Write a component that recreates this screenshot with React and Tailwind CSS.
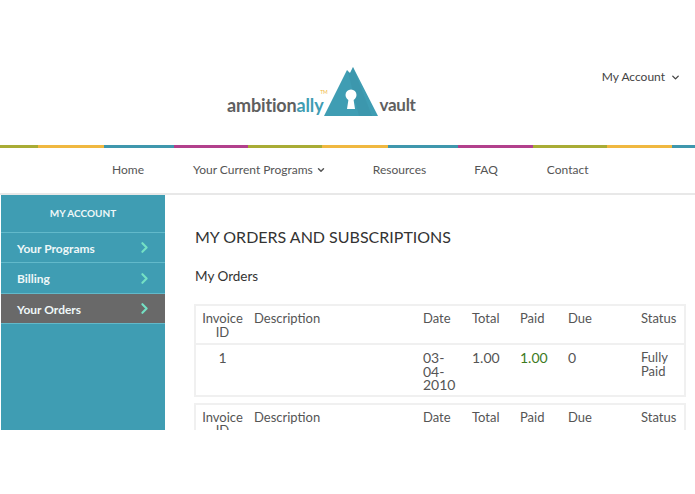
import React from 'react';
import { ChevronDown, ChevronRight } from 'lucide-react';

const stripes = [
  ['w-[38px]', 'bg-[#a9ac35]'],
  ['w-[66px]', 'bg-[#f0b840]'],
  ['w-[70px]', 'bg-[#3f97ad]'],
  ['w-[74px]', 'bg-[#b2408c]'],
  ['w-[74px]', 'bg-[#a9ac35]'],
  ['w-[66px]', 'bg-[#f0b840]'],
  ['w-[70px]', 'bg-[#3f97ad]'],
  ['w-[75px]', 'bg-[#b2408c]'],
  ['w-[74px]', 'bg-[#a9ac35]'],
  ['w-[65px]', 'bg-[#f0b840]'],
  ['flex-1', 'bg-[#3f97ad]'],
];

const Logo = () => (
  <div className="flex items-end">
    <span className="relative mb-[1px] text-[18px] leading-[22px] font-bold tracking-[-0.15px] text-[#5f5f60]">
      ambition<span className="text-[#3f9db3]">ally</span>
      <span className="absolute top-[-5px] right-[-4px] text-[5px] leading-[6px] font-normal text-[#f0b840]">TM</span>
    </span>
    <svg width="56" height="52" viewBox="0 0 56 52" className="ml-[-1px]">
      <path d="M1 51 L24 5 L27 8 L30 2 L55 51 Z" fill="#3f9db3" />
      <path d="M25 7 L27 8 L30 2 L49 51 L36 51 Z" fill="#358a9e" opacity="0.3" />
      <circle cx="28" cy="30" r="5.5" fill="#fff" />
      <path d="M26 31 L24 44 L32 44 L30 31 Z" fill="#fff" />
    </svg>
    <span className="mb-[1px] ml-[1px] text-[17px] leading-[22px] font-bold tracking-[-0.3px] text-[#5f5f60]">vault</span>
  </div>
);

const SideItem = ({ label, active, h }) => (
  <div
    className={`flex items-center justify-between border-b border-[#62b9ca] pt-[2px] pl-[16px] pr-[12px] text-[12px] font-bold text-[#eef7f8] ${h} ${
      active ? 'bg-[#696969]' : ''
    }`}
  >
    <span>{label}</span>
    <ChevronRight className="mt-[-2px] h-[17px] w-[17px] text-[#74e0c4]" strokeWidth={3} />
  </div>
);

const OrderTable = () => (
  <table className="mb-[6px] -ml-[1px] w-[490px] table-fixed border-collapse border-2 border-[#f0f0f0] text-[13px] leading-[13.5px] text-[#555]">
    <colgroup>
      <col className="w-[54px]" />
      <col className="w-[169px]" />
      <col className="w-[49px]" />
      <col className="w-[48px]" />
      <col className="w-[48px]" />
      <col className="w-[73px]" />
      <col className="w-[49px]" />
    </colgroup>
    <thead>
      <tr className="border-b-2 border-[#f0f0f0]">
        <th className="px-[5px] pt-[6px] pb-[4px] text-center align-top font-normal">Invoice ID</th>
        <th className="px-[5px] pt-[6px] text-left align-top font-normal">Description</th>
        <th className="px-[5px] pt-[6px] text-left align-top font-normal">Date</th>
        <th className="px-[5px] pt-[6px] text-left align-top font-normal">Total</th>
        <th className="px-[5px] pt-[6px] text-left align-top font-normal">Paid</th>
        <th className="px-[5px] pt-[6px] text-left align-top font-normal">Due</th>
        <th className="px-[5px] pt-[6px] text-left align-top font-normal">Status</th>
      </tr>
    </thead>
    <tbody>
      <tr>
        <td className="px-[5px] pt-[6px] pb-[3px] text-center align-top text-[14px]">1</td>
        <td className="px-[5px] pt-[6px] align-top"></td>
        <td className="px-[5px] pt-[6px] pb-[3px] align-top text-[14px]">03-04-2010</td>
        <td className="px-[5px] pt-[6px] align-top text-[14px]">1.00</td>
        <td className="px-[5px] pt-[6px] align-top text-[14px] text-[#3d7a1e]">1.00</td>
        <td className="px-[5px] pt-[6px] align-top text-[14px]">0</td>
        <td className="px-[5px] pt-[6px] align-top">Fully Paid</td>
      </tr>
    </tbody>
  </table>
);

export default function App() {
  return (
    <div className="h-[494px] w-[695px] overflow-hidden bg-white font-['Lato','Noto_Sans',sans-serif]">
      {/* Header */}
      <div className="relative flex h-[145px] items-end pb-[28px] pl-[227px]">
        <Logo />
        <div className="absolute top-[69px] right-[14px] flex items-center gap-[5px] text-[12px] leading-[16px] text-[#444]">
          My Account
          <ChevronDown className="h-[11px] w-[11px]" strokeWidth={3} />
        </div>
      </div>

      {/* Color stripe */}
      <div className="flex h-[3px]">
        {stripes.map(([w, c], i) => (
          <div key={i} className={`${w} ${c}`} />
        ))}
      </div>

      {/* Nav */}
      <div className="flex h-[47px] items-center border-b-2 border-[#e8e8e8] pb-[2px] pl-[112px] text-[12px] text-[#555]">
        <span className="mr-[49px]">Home</span>
        <span className="mr-[47px] flex items-center gap-[3px]">
          Your Current Programs
          <ChevronDown className="h-[10px] w-[10px]" strokeWidth={3.5} />
        </span>
        <span className="mr-[48px]">Resources</span>
        <span className="mr-[49px]">FAQ</span>
        <span>Contact</span>
      </div>

      {/* Body */}
      <div className="flex h-[235px] overflow-hidden pl-[1px]">
        <aside className="w-[164px] shrink-0 bg-[#3f9db3]">
          <div className="flex h-[38px] items-center justify-center border-b border-[#62b9ca] text-[10px] font-bold text-[#eef7f8]">
            MY ACCOUNT
          </div>
          <SideItem label="Your Programs" h="h-[30px]" />
          <SideItem label="Billing" h="h-[31px]" />
          <SideItem label="Your Orders" h="h-[30px]" active />
        </aside>
        <main className="flex-1 pl-[30px]">
          <h1 className="mt-[32px] text-[16px] leading-[20px] font-normal text-[#333]">MY ORDERS AND SUBSCRIPTIONS</h1>
          <h2 className="mt-[21px] mb-[19px] text-[13.5px] leading-[17px] font-normal text-[#333]">My Orders</h2>
          <OrderTable />
          <OrderTable />
        </main>
      </div>
    </div>
  );
}
